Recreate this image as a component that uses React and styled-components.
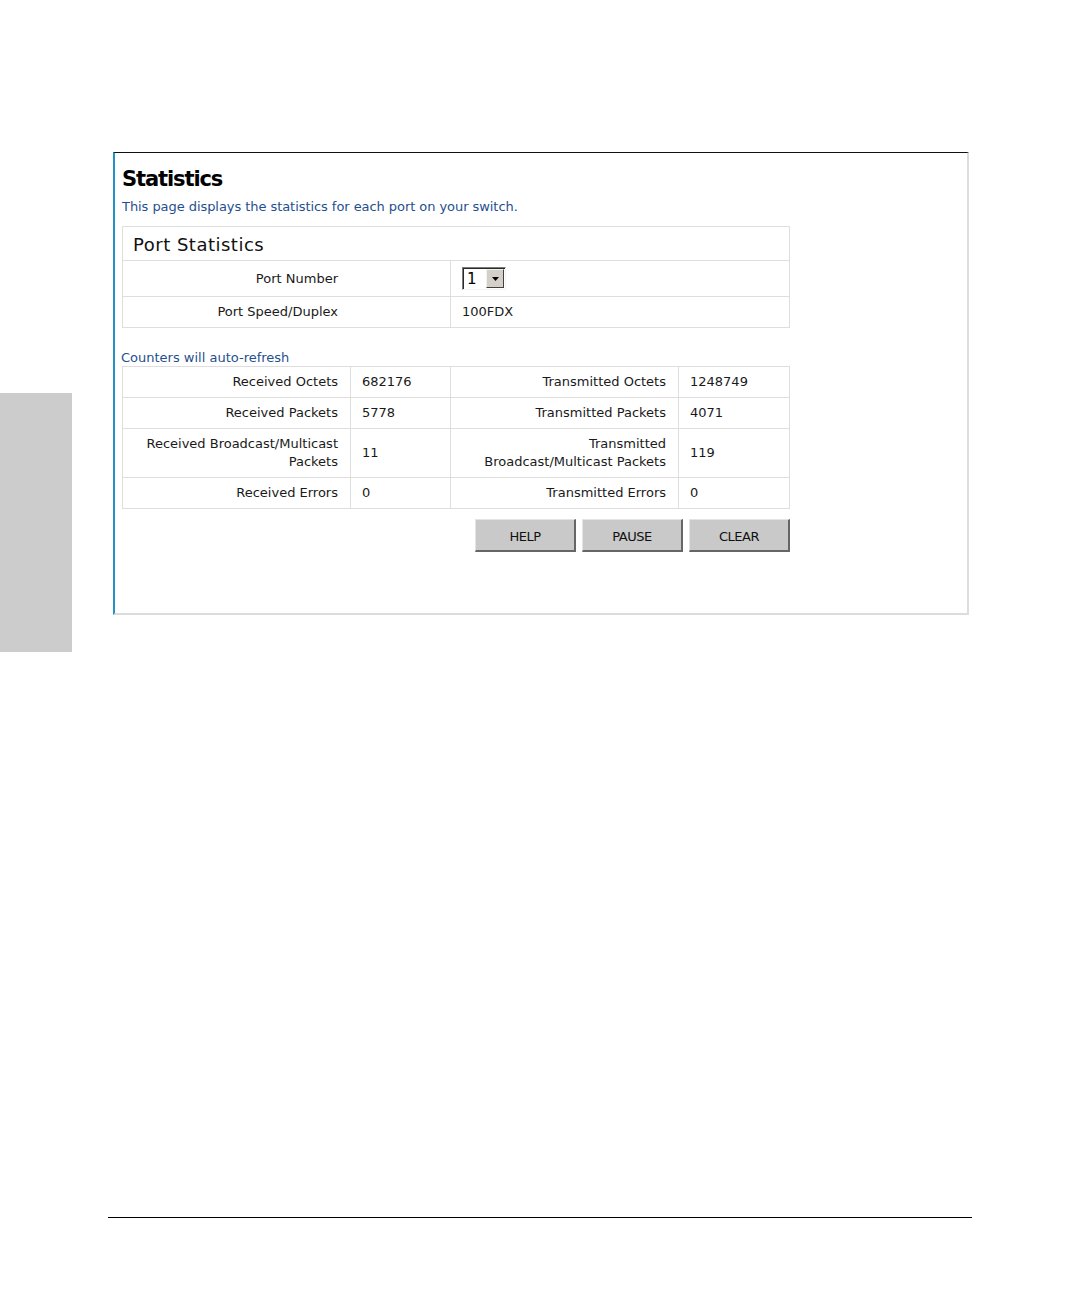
import React from "react";
import styled, { createGlobalStyle } from "styled-components";

const Global = createGlobalStyle`
  html, body { margin: 0; padding: 0; background: #ffffff; }
  body { font-family: "DejaVu Sans", Verdana, sans-serif; color: #111; }
`;

const Page = styled.div`
  width: 1080px;
  min-height: 1296px;
  padding-top: 152px;
  box-sizing: border-box;
  overflow: hidden;
`;

const TopRow = styled.div`
  display: flex;
  align-items: flex-start;
`;

const SideTab = styled.div`
  flex: none;
  width: 72px;
  height: 259px;
  margin-top: 241px;
  background: #cccccc;
`;

const Frame = styled.section`
  flex: none;
  margin-left: 41px;
  width: 856px;
  height: 463px;
  box-sizing: border-box;
  border-top: 1px solid #111;
  border-left: 2px solid #2392c6;
  border-right: 2px solid #dcdcdc;
  border-bottom: 2px solid #dcdcdc;
  padding: 13px 0 0 7px;
`;

const Title = styled.h1`
  margin: 0;
  font-family: "DejaVu Sans", Verdana, sans-serif;
  font-weight: bold;
  font-size: 21px;
  line-height: 26px;
  letter-spacing: -1.1px;
  color: #000;
`;

const Intro = styled.p`
  margin: 6px 0 0;
  font-size: 13px;
  line-height: 17px;
  letter-spacing: -0.06px;
  color: #1f4f8f;
`;

const Grid = styled.div`
  display: grid;
  grid-template-columns: ${(p) => p.$cols};
  width: 668px;
  box-sizing: border-box;
  gap: 1px;
  border: 1px solid #dedede;
  background: #dedede;
  margin-top: ${(p) => p.$mt || 0}px;
`;

const HeadCell = styled.div`
  grid-column: 1 / -1;
  background: #fff;
  padding: 7px 10px 4px;
  font-size: 18px;
  line-height: 22px;
  letter-spacing: 0.5px;
  color: #111;
`;

const Cell = styled.div`
  display: flex;
  align-items: center;
  justify-content: ${(p) => (p.$label ? "flex-end" : "flex-start")};
  text-align: ${(p) => (p.$label ? "right" : "left")};
  background: #fff;
  padding: ${(p) => p.$py || 6}px ${(p) => p.$pr || 12}px ${(p) => p.$py || 6}px
    ${(p) => p.$pl || 12}px;
  font-size: 13px;
  line-height: 18px;
  color: #1a1a1a;
`;

const SelectBox = styled.div`
  display: flex;
  align-items: center;
  width: 44px;
  height: 23px;
  box-sizing: border-box;
  background: #fff;
  border-style: solid;
  border-width: 1px;
  border-color: #7b7b7b #f4f4f4 #f4f4f4 #7b7b7b;
  box-shadow: inset 1px 1px 0 #2a2a2a;
`;

const SelectValue = styled.span`
  flex: 1;
  padding-left: 4px;
  font-size: 15px;
  line-height: 18px;
  color: #000;
`;

const DropButton = styled.span`
  display: flex;
  align-items: center;
  justify-content: center;
  width: 18px;
  height: 19px;
  margin-right: 1px;
  box-sizing: border-box;
  background: #d4d0c8;
  border-style: solid;
  border-width: 1px;
  border-color: #f2f2f2 #404040 #404040 #f2f2f2;
`;

const CounterNote = styled.div`
  margin: 21px 0 0 -1px;
  font-size: 13px;
  line-height: 17px;
  color: #1f4f8f;
`;

const ButtonRow = styled.div`
  display: flex;
  justify-content: flex-end;
  gap: 6px;
  width: 668px;
  margin-top: 10px;
`;

const Button = styled.button`
  width: 101px;
  height: 33px;
  box-sizing: border-box;
  background: #c9c9c9;
  border-style: solid;
  border-width: 1px 2px 2px 1px;
  border-color: #e4e4e4 #666 #666 #e4e4e4;
  font-family: "DejaVu Sans", Verdana, sans-serif;
  font-size: 13px;
  letter-spacing: -0.5px;
  color: #111;
  padding: 2px 0 0;
  cursor: pointer;
`;

const Footer = styled.hr`
  margin: 565px 0 0 108px;
  width: 864px;
  height: 0;
  border: 0;
  border-top: 1px solid #000;
`;

const counters = [
  ["Received Octets", "682176", "Transmitted Octets", "1248749"],
  ["Received Packets", "5778", "Transmitted Packets", "4071"],
  [
    <>Received Broadcast/Multicast<br />Packets</>,
    "11",
    <>Transmitted<br />Broadcast/Multicast Packets</>,
    "119",
  ],
  ["Received Errors", "0", "Transmitted Errors", "0"],
];

export default function App() {
  return (
    <Page>
      <Global />
      <TopRow>
        <SideTab />
        <Frame>
          <Title>Statistics</Title>
          <Intro>This page displays the statistics for each port on your switch.</Intro>

          <Grid $cols="327px 338px" $mt={11}>
            <HeadCell>Port Statistics</HeadCell>
            <Cell $label $pr={112}>Port Number</Cell>
            <Cell $py={6} $pl={11}>
              <SelectBox>
                <SelectValue>1</SelectValue>
                <DropButton>
                  <svg width="7" height="4" viewBox="0 0 7 4">
                    <path d="M0 0h7L3.5 4z" fill="#000" />
                  </svg>
                </DropButton>
              </SelectBox>
            </Cell>
            <Cell $label $pr={112}>Port Speed/Duplex</Cell>
            <Cell $pl={11}>100FDX</Cell>
          </Grid>

          <CounterNote>Counters will auto-refresh</CounterNote>
          <Grid $cols="227px 99px 227px 110px">
            {counters.map((r, i) => (
              <React.Fragment key={i}>
                <Cell $label>{r[0]}</Cell>
                <Cell $pl={11}>{r[1]}</Cell>
                <Cell $label>{r[2]}</Cell>
                <Cell $pl={11}>{r[3]}</Cell>
              </React.Fragment>
            ))}
          </Grid>

          <ButtonRow>
            <Button>HELP</Button>
            <Button>PAUSE</Button>
            <Button>CLEAR</Button>
          </ButtonRow>
        </Frame>
      </TopRow>
      <Footer />
    </Page>
  );
}
